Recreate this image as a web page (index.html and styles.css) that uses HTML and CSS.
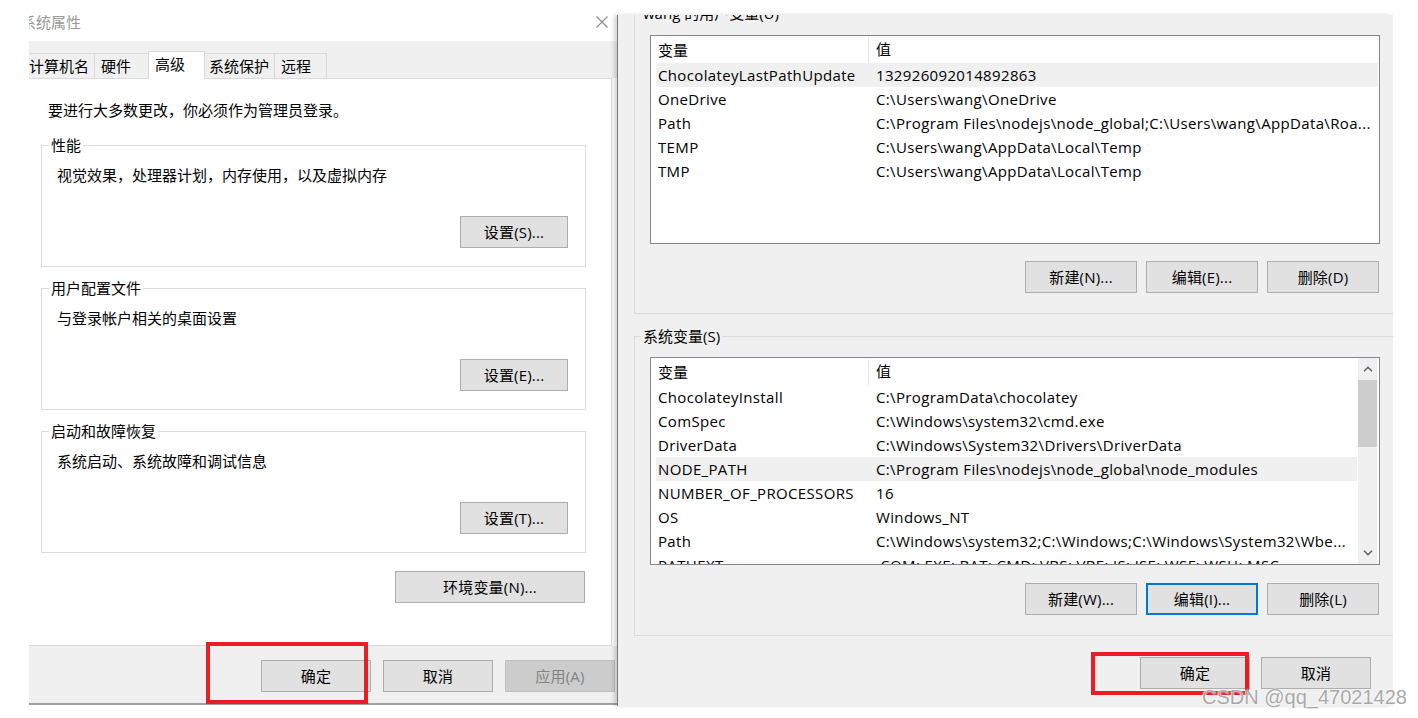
FILE: index.html
```html
<!DOCTYPE html>
<html lang="zh-CN">
<head>
<meta charset="utf-8">
<title>系统属性 - 环境变量</title>
<link rel="stylesheet" href="styles.css">
</head>
<body>
<div class="screen">
  <div class="gutter"></div>

  <section class="dlg-sys">
    <header class="titlebar">
      <span class="title">系统属性</span>
      <svg class="close" width="12" height="12" viewBox="0 0 12 12"><path d="M0.5 0.5L11.5 11.5M11.5 0.5L0.5 11.5" stroke="#8c8c8c" stroke-width="1.1" fill="none"/></svg>
    </header>
    <nav class="tabs">
      <span class="tab t1">计算机名</span>
      <span class="tab t2">硬件</span>
      <span class="tab t3 active">高级</span>
      <span class="tab t4">系统保护</span>
      <span class="tab t5">远程</span>
    </nav>
    <div class="pane">
      <p class="notice">要进行大多数更改，你必须作为管理员登录。</p>
      <div class="group">
        <span class="legend">性能</span>
        <p class="desc">视觉效果，处理器计划，内存使用，以及虚拟内存</p>
        <button class="btn set">设置(S)...</button>
      </div>
      <div class="group">
        <span class="legend">用户配置文件</span>
        <p class="desc">与登录帐户相关的桌面设置</p>
        <button class="btn set">设置(E)...</button>
      </div>
      <div class="group">
        <span class="legend">启动和故障恢复</span>
        <p class="desc">系统启动、系统故障和调试信息</p>
        <button class="btn set">设置(T)...</button>
      </div>
      <button class="btn env">环境变量(N)...</button>
    </div>
    <footer class="foot">
      <button class="btn wide">确定</button>
      <button class="btn wide">取消</button>
      <button class="btn wide disabled">应用(A)</button>
    </footer>
  </section>

  <section class="dlg-env">
    <div class="egroup first">
      <span class="elegend">wang 的用户变量(U)</span>
      <div class="list user">
        <div class="lmain">
          <div class="lhead"><span>变量</span><span>值</span></div>
          <div class="lrow sel"><span>ChocolateyLastPathUpdate</span><span>132926092014892863</span></div>
          <div class="lrow"><span>OneDrive</span><span>C:\Users\wang\OneDrive</span></div>
          <div class="lrow"><span>Path</span><span>C:\Program Files\nodejs\node_global;C:\Users\wang\AppData\Roa...</span></div>
          <div class="lrow"><span>TEMP</span><span>C:\Users\wang\AppData\Local\Temp</span></div>
          <div class="lrow"><span>TMP</span><span>C:\Users\wang\AppData\Local\Temp</span></div>
        </div>
      </div>
      <div class="btnrow">
        <button class="btn mid">新建(N)...</button>
        <button class="btn mid">编辑(E)...</button>
        <button class="btn mid">删除(D)</button>
      </div>
    </div>

    <div class="egroup second">
      <span class="elegend">系统变量(S)</span>
      <div class="list sys">
        <div class="lmain">
          <div class="lhead"><span>变量</span><span>值</span></div>
          <div class="lrow"><span>ChocolateyInstall</span><span>C:\ProgramData\chocolatey</span></div>
          <div class="lrow"><span>ComSpec</span><span>C:\Windows\system32\cmd.exe</span></div>
          <div class="lrow"><span>DriverData</span><span>C:\Windows\System32\Drivers\DriverData</span></div>
          <div class="lrow sel"><span>NODE_PATH</span><span>C:\Program Files\nodejs\node_global\node_modules</span></div>
          <div class="lrow"><span>NUMBER_OF_PROCESSORS</span><span>16</span></div>
          <div class="lrow"><span>OS</span><span>Windows_NT</span></div>
          <div class="lrow"><span>Path</span><span>C:\Windows\system32;C:\Windows;C:\Windows\System32\Wbe...</span></div>
          <div class="lrow"><span>PATHEXT</span><span>.COM;.EXE;.BAT;.CMD;.VBS;.VBE;.JS;.JSE;.WSF;.WSH;.MSC</span></div>
        </div>
        <div class="scroll">
          <div class="sarrow up"><svg width="10" height="6" viewBox="0 0 10 6"><path d="M1 5.2L5 1.2L9 5.2" stroke="#606060" stroke-width="1.5" fill="none"/></svg></div>
          <div class="thumb"></div>
          <div class="strack"></div>
          <div class="sarrow down"><svg width="10" height="6" viewBox="0 0 10 6"><path d="M1 0.8L5 4.8L9 0.8" stroke="#606060" stroke-width="1.5" fill="none"/></svg></div>
        </div>
      </div>
      <div class="btnrow">
        <button class="btn mid">新建(W)...</button>
        <button class="btn mid focus">编辑(I)...</button>
        <button class="btn mid">删除(L)</button>
      </div>
    </div>

    <div class="efoot">
      <button class="btn wide">确定</button>
      <button class="btn wide">取消</button>
    </div>
  </section>

  <div class="mark mark-left"></div>
  <div class="mark mark-right"></div>
  <div class="watermark">CSDN @qq_47021428</div>
</div>
</body>
</html>
```

FILE: styles.css
```css
html, body {
  margin: 0;
  padding: 0;
  background: #ffffff;
}

body {
  font-family: "Open Sans", "Noto Sans CJK SC", sans-serif;
  font-size: 15px;
  color: #000000;
}

p {
  margin: 0;
}

.screen {
  position: relative;
  width: 1418px;
  height: 718px;
  overflow: hidden;
  display: flex;
  align-items: flex-start;
}

.gutter {
  flex: none;
  width: 29px;
}

/* ---------- buttons ---------- */
.btn {
  font: inherit;
  font-size: 15px;
  color: #000000;
  background: #e1e1e1;
  border: 1px solid #adadad;
  box-sizing: border-box;
  height: 32px;
  padding: 0;
  margin: 0;
  line-height: 30px;
  text-align: center;
  white-space: nowrap;
  flex: none;
  letter-spacing: 0.2px;
}

.btn.wide {
  width: 110px;
}

.btn.mid {
  width: 112px;
}

.btn.focus {
  border: 2px solid #0078d7;
  line-height: 28px;
}

.btn.disabled {
  background: #cccccc;
  border-color: #bfbfbf;
  color: #838383;
}

/* ---------- left dialog: 系统属性 ---------- */
.dlg-sys {
  flex: none;
  width: 588px;
  height: 705px;
  background: #ffffff;
  overflow: hidden;
  display: flex;
  flex-direction: column;
}

.titlebar {
  flex: none;
  height: 41px;
  box-sizing: border-box;
  padding: 3px 9px 0 0;
  display: flex;
  align-items: center;
  justify-content: space-between;
  background: #ffffff;
}

.title {
  margin-left: -8px;
  color: #999999;
  font-size: 15px;
  line-height: 20px;
}

.close {
  display: block;
}

.tabs {
  flex: none;
  height: 37px;
  margin-left: -7px;
  background: #f0f0f0;
  display: flex;
  align-items: flex-end;
}

.tab {
  flex: none;
  box-sizing: border-box;
  height: 25px;
  border: 1px solid #d9d9d9;
  border-bottom: none;
  margin-right: -1px;
  padding-left: 6px;
  line-height: 24px;
  background: #f0f0f0;
  white-space: nowrap;
}

.t1 { width: 73px; }
.t2 { width: 55px; }
.t3 { width: 57px; }
.t4 { width: 71px; padding-left: 4px; }
.t5 { width: 53px; }

.tab.active {
  position: relative;
  z-index: 1;
  height: 28px;
  margin-bottom: -1px;
  background: #ffffff;
  line-height: 24px;
}

.pane {
  flex: none;
  width: 590px;
  height: 568px;
  margin-left: -7px;
  box-sizing: border-box;
  border: 1px solid #d9d9d9;
  background: #ffffff;
  display: flex;
  flex-direction: column;
  align-items: flex-start;
}

.notice {
  margin: 21px 0 0 25px;
  line-height: 20px;
}

.group {
  flex: none;
  margin: 21px 0 0 18px;
  width: 545px;
  height: 122px;
  box-sizing: border-box;
  border: 1px solid #dcdcdc;
  display: flex;
  flex-direction: column;
  align-items: flex-start;
}

.notice + .group {
  margin-top: 25px;
}

.legend {
  margin: -11px 0 0 7px;
  padding: 0 2px;
  background: #ffffff;
  line-height: 20px;
}

.desc {
  margin: 10px 0 0 15px;
  line-height: 20px;
}

.btn.set {
  width: 108px;
  align-self: flex-end;
  margin: 31px 17px 0 0;
}

.btn.env {
  width: 190px;
  margin: 18px 0 0 372px;
}

.foot {
  flex: none;
  height: 59px;
  box-sizing: border-box;
  background: #f0f0f0;
  border-bottom: 2px solid #a0a0a0;
  padding: 14px 2px 0 0;
  display: flex;
  justify-content: flex-end;
  align-items: flex-start;
  gap: 12px;
}

/* ---------- right dialog: 环境变量 ---------- */
.dlg-env {
  flex: none;
  position: relative;
  z-index: 2;
  width: 776px;
  height: 691px;
  margin-top: 15px;
  box-sizing: border-box;
  border-left: 1px solid #7a7a7a;
  background: #f0f0f0;
  box-shadow: -3px 0 4px rgba(0, 0, 0, 0.16);
  overflow: hidden;
  display: flex;
  flex-direction: column;
}

.egroup {
  flex: none;
  margin: 0 -30px 0 16px;
  border: 1px solid #dcdcdc;
  padding-bottom: 20px;
  display: flex;
  flex-direction: column;
  align-items: flex-start;
}

.egroup.first {
  margin-top: -2px;
}

.egroup.second {
  margin-top: 22px;
}

.elegend {
  margin: -11px 0 0 6px;
  padding: 0 2px;
  background: #f0f0f0;
  line-height: 20px;
  white-space: nowrap;
}

.list {
  flex: none;
  margin: 12px 0 0 15px;
  width: 730px;
  height: 209px;
  box-sizing: border-box;
  border: 1px solid #828790;
  background: #ffffff;
  display: flex;
  overflow: hidden;
}

.list.sys {
  margin-top: 11px;
  height: 208px;
}

.lmain {
  flex: 1;
  min-width: 0;
  overflow: hidden;
  display: flex;
  flex-direction: column;
}

.lhead {
  flex: none;
  height: 27px;
  display: grid;
  grid-template-columns: 218px 1fr;
}

.lhead span {
  padding-left: 7px;
  line-height: 27px;
}

.lhead span:first-child {
  border-right: 1px solid #e5e5e5;
  margin-top: 1px;
  line-height: 26px;
}

.lrow {
  flex: none;
  height: 24px;
  margin: 0 1px 0 5px;
  display: grid;
  grid-template-columns: 220px 1fr;
  line-height: 24px;
  white-space: nowrap;
  letter-spacing: 0.35px;
}

.lrow span {
  overflow: hidden;
}

.lrow span:first-child {
  padding-left: 2px;
}

.lrow.sel {
  background: #f0f0f0;
}

.scroll {
  flex: none;
  width: 19px;
  margin-right: 2px;
  background: #f0f0f0;
  display: flex;
  flex-direction: column;
}

.sarrow {
  flex: none;
  height: 22px;
  display: flex;
  align-items: center;
  justify-content: center;
}

.sarrow.down {
  height: 23px;
}

.sarrow svg {
  display: block;
}

.thumb {
  flex: none;
  height: 67px;
  background: #cdcdcd;
}

.strack {
  flex: 1;
}

.btnrow {
  flex: none;
  width: 730px;
  margin: 17px 0 0 15px;
  padding-right: 1px;
  box-sizing: border-box;
  display: flex;
  justify-content: flex-end;
  gap: 9px;
}

.list.sys + .btnrow {
  margin-top: 18px;
}

.efoot {
  flex: none;
  margin-top: 21px;
  padding-right: 22px;
  display: flex;
  justify-content: flex-end;
  gap: 11px;
}

/* ---------- annotations over the screenshot ---------- */
.mark {
  position: absolute;
  z-index: 5;
  box-sizing: border-box;
  border: 4px solid #ec1c24;
}

.mark-left {
  left: 206px;
  top: 642px;
  width: 162px;
  height: 62px;
}

.mark-right {
  left: 1091px;
  top: 652px;
  width: 158px;
  height: 43px;
}

.watermark {
  position: absolute;
  z-index: 6;
  left: 1202px;
  top: 686px;
  font-family: "Liberation Sans", Arial, sans-serif;
  font-size: 20px;
  line-height: 22px;
  color: #a9a9a9;
  white-space: nowrap;
  text-shadow: 0 0 1px #ffffff, 0 0 2px #ffffff;
}
```
